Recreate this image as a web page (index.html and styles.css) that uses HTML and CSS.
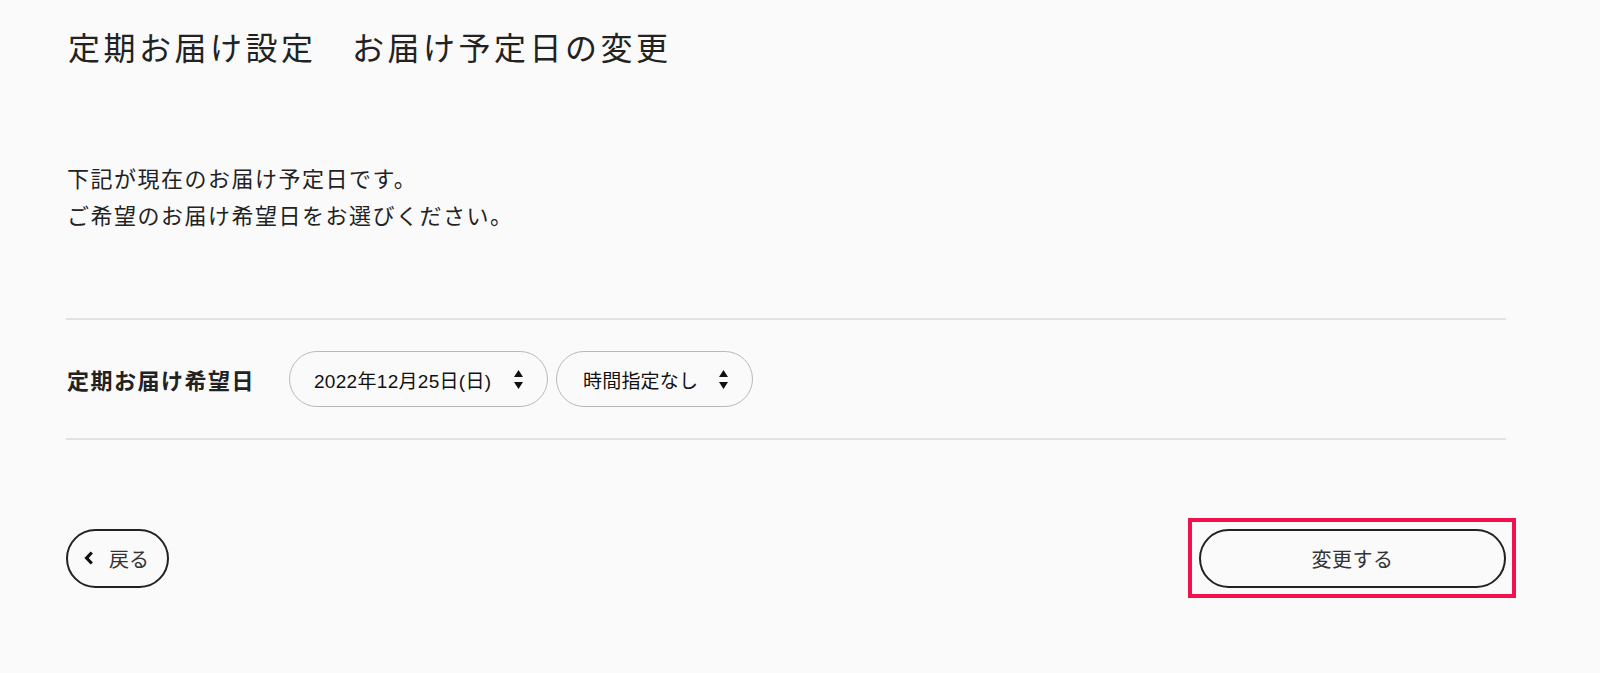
FILE: index.html
```html
<!DOCTYPE html>
<html lang="ja">
<head>
<meta charset="utf-8">
<title>お届け予定日の変更</title>
<link rel="stylesheet" href="styles.css">
</head>
<body>
<main class="page">
  <h1 class="title">定期お届け設定　お届け予定日の変更</h1>
  <p class="lead">下記が現在のお届け予定日です。<br>ご希望のお届け希望日をお選びください。</p>
  <section class="form-row">
    <div class="label">定期お届け希望日</div>
    <div class="selects">
      <div class="select select-date">
        <span class="select-text">2022年12月25日(日)</span>
        <svg class="arrows" width="9" height="19" viewBox="0 0 9 19"><path d="M4.5 0 L9 7 L0 7 Z M0 12 L9 12 L4.5 19 Z" fill="#111"/></svg>
      </div>
      <div class="select select-time">
        <span class="select-text">時間指定なし</span>
        <svg class="arrows" width="9" height="19" viewBox="0 0 9 19"><path d="M4.5 0 L9 7 L0 7 Z M0 12 L9 12 L4.5 19 Z" fill="#111"/></svg>
      </div>
    </div>
  </section>
  <div class="actions">
    <button class="btn btn-back" type="button">
      <svg class="chev" width="10" height="14" viewBox="0 0 10 14"><path d="M7.8 1.5 L2.6 7 L7.8 12.5" fill="none" stroke="#111" stroke-width="3.2" stroke-linejoin="miter"/></svg>
      <span>戻る</span>
    </button>
    <div class="highlight">
      <button class="btn btn-submit" type="button">変更する</button>
    </div>
  </div>
</main>
</body>
</html>
```

FILE: styles.css
```css
html, body {
  margin: 0;
  padding: 0;
  background: #fafafa;
}
body {
  font-family: "Noto Sans CJK JP", "Noto Sans", sans-serif;
  color: #222;
}
.page {
  width: 1440px;
  padding: 0 0 0 66px;
}
.title {
  margin: 22px 0 0;
  font-size: 32px;
  font-weight: 400;
  line-height: 48px;
  letter-spacing: 3.5px;
  margin-left: 2px;
}
.lead {
  margin: 89px 0 0;
  font-size: 22px;
  line-height: 37px;
  letter-spacing: 1.5px;
  margin-left: 1px;
}
.form-row {
  margin-top: 85px;
  border-top: 2px solid #e2e2e2;
  border-bottom: 2px solid #e2e2e2;
  height: 118px;
  display: flex;
  align-items: center;
}
.label {
  width: 222px;
  font-size: 22px;
  font-weight: 700;
  letter-spacing: 1.5px;
  padding-left: 1px;
}
.selects {
  display: flex;
  gap: 8px;
}
.select {
  height: 56px;
  box-sizing: border-box;
  border: 1.5px solid #b9b9b9;
  border-radius: 28px;
  display: flex;
  align-items: center;
  justify-content: space-between;
  padding: 0 24px 0 24px;
  background: #fafafa;
}
.select-date { width: 259px; }
.select-time { width: 197px; padding-left: 26px; }
.select-text {
  font-family: "Liberation Sans", "Noto Sans CJK JP", sans-serif;
  font-size: 19px;
  color: #111;
}
.select-date .select-text { letter-spacing: 0.3px; }
.select-time .select-text { font-family: "Noto Sans CJK JP", sans-serif; letter-spacing: 0.2px; }
.arrows { display: block; }
.actions {
  margin-top: 78px;
  display: flex;
  justify-content: space-between;
  align-items: center;
}
.btn {
  font-family: "Noto Sans CJK JP", sans-serif;
  font-size: 20px;
  color: #333;
  background: #fafafa;
  border: 2px solid #222;
  border-radius: 30px;
  height: 59px;
  box-sizing: border-box;
  cursor: pointer;
}
.btn-back {
  width: 103px;
  display: flex;
  align-items: center;
  gap: 15px;
  padding: 0 0 0 16px;
}
.chev { display: block; }
.highlight {
  border: 4px solid #f3114f;
  padding: 7px 6px 6px 7px;
  margin-right: -10px;
  display: flex;
}
.btn-submit {
  width: 307px;
  letter-spacing: 0.5px;
}
```
